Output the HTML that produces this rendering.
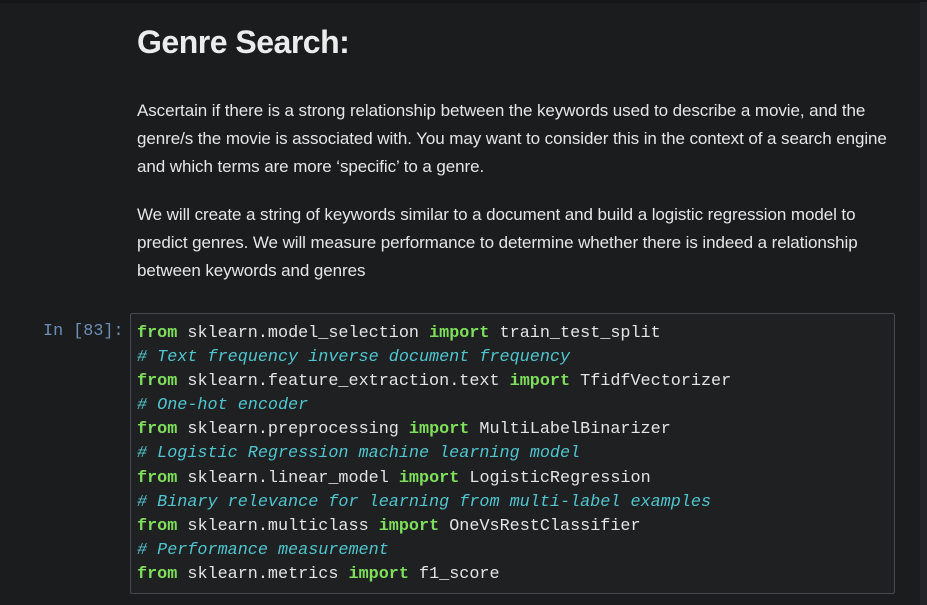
<!DOCTYPE html>
<html><head><style>
body{margin:0;width:927px;height:605px;background:#1b1c1e;overflow:hidden;position:relative;font-family:"Liberation Sans",Arial,sans-serif;}
.top{position:absolute;left:0;top:0;width:927px;height:3px;background:#151617;}
.rs{position:absolute;left:920px;top:2px;width:7px;height:603px;background:#232427;}
h1{position:absolute;left:137px;top:24px;margin:0;font-size:32px;font-weight:bold;color:#ececec;letter-spacing:-0.5px;}
p{position:absolute;left:137px;margin:0;width:760px;font-size:17px;line-height:28px;color:#e6e6e6;letter-spacing:-0.08px;}
.prompt{position:absolute;left:43px;top:322px;font-family:"Liberation Mono",monospace;font-size:16.8px;color:#6d8fb8;}
.box{position:absolute;left:130px;top:313px;width:763px;height:279px;background:#1f2022;border:1px solid #46494c;border-radius:2px;}
pre{position:absolute;left:137px;top:322px;margin:0;font-family:"Liberation Mono",monospace;font-size:16.8px;line-height:24.1px;color:#e4e4e4;}
.k{color:#7ee05a;font-weight:bold}
.c{color:#4fc6cf;font-style:italic}
</style></head><body>
<div class="top"></div><div class="rs"></div>
<h1>Genre Search:</h1>
<p style="top:97px">Ascertain if there is a strong relationship between the keywords used to describe a movie, and the genre/s the movie is associated with. You may want to consider this in the context of a search engine and which terms are more ‘specific’ to a genre.</p>
<p style="top:201px">We will create a string of keywords similar to a document and build a logistic regression model to predict genres. We will measure performance to determine whether there is indeed a relationship between keywords and genres</p>
<div class="prompt">In [83]:</div>
<div class="box"></div>
<pre><span class="k">from</span> sklearn.model_selection <span class="k">import</span> train_test_split
<span class="c"># Text frequency inverse document frequency</span>
<span class="k">from</span> sklearn.feature_extraction.text <span class="k">import</span> TfidfVectorizer
<span class="c"># One-hot encoder</span>
<span class="k">from</span> sklearn.preprocessing <span class="k">import</span> MultiLabelBinarizer
<span class="c"># Logistic Regression machine learning model</span>
<span class="k">from</span> sklearn.linear_model <span class="k">import</span> LogisticRegression
<span class="c"># Binary relevance for learning from multi-label examples</span>
<span class="k">from</span> sklearn.multiclass <span class="k">import</span> OneVsRestClassifier
<span class="c"># Performance measurement</span>
<span class="k">from</span> sklearn.metrics <span class="k">import</span> f1_score</pre>
</body></html>
